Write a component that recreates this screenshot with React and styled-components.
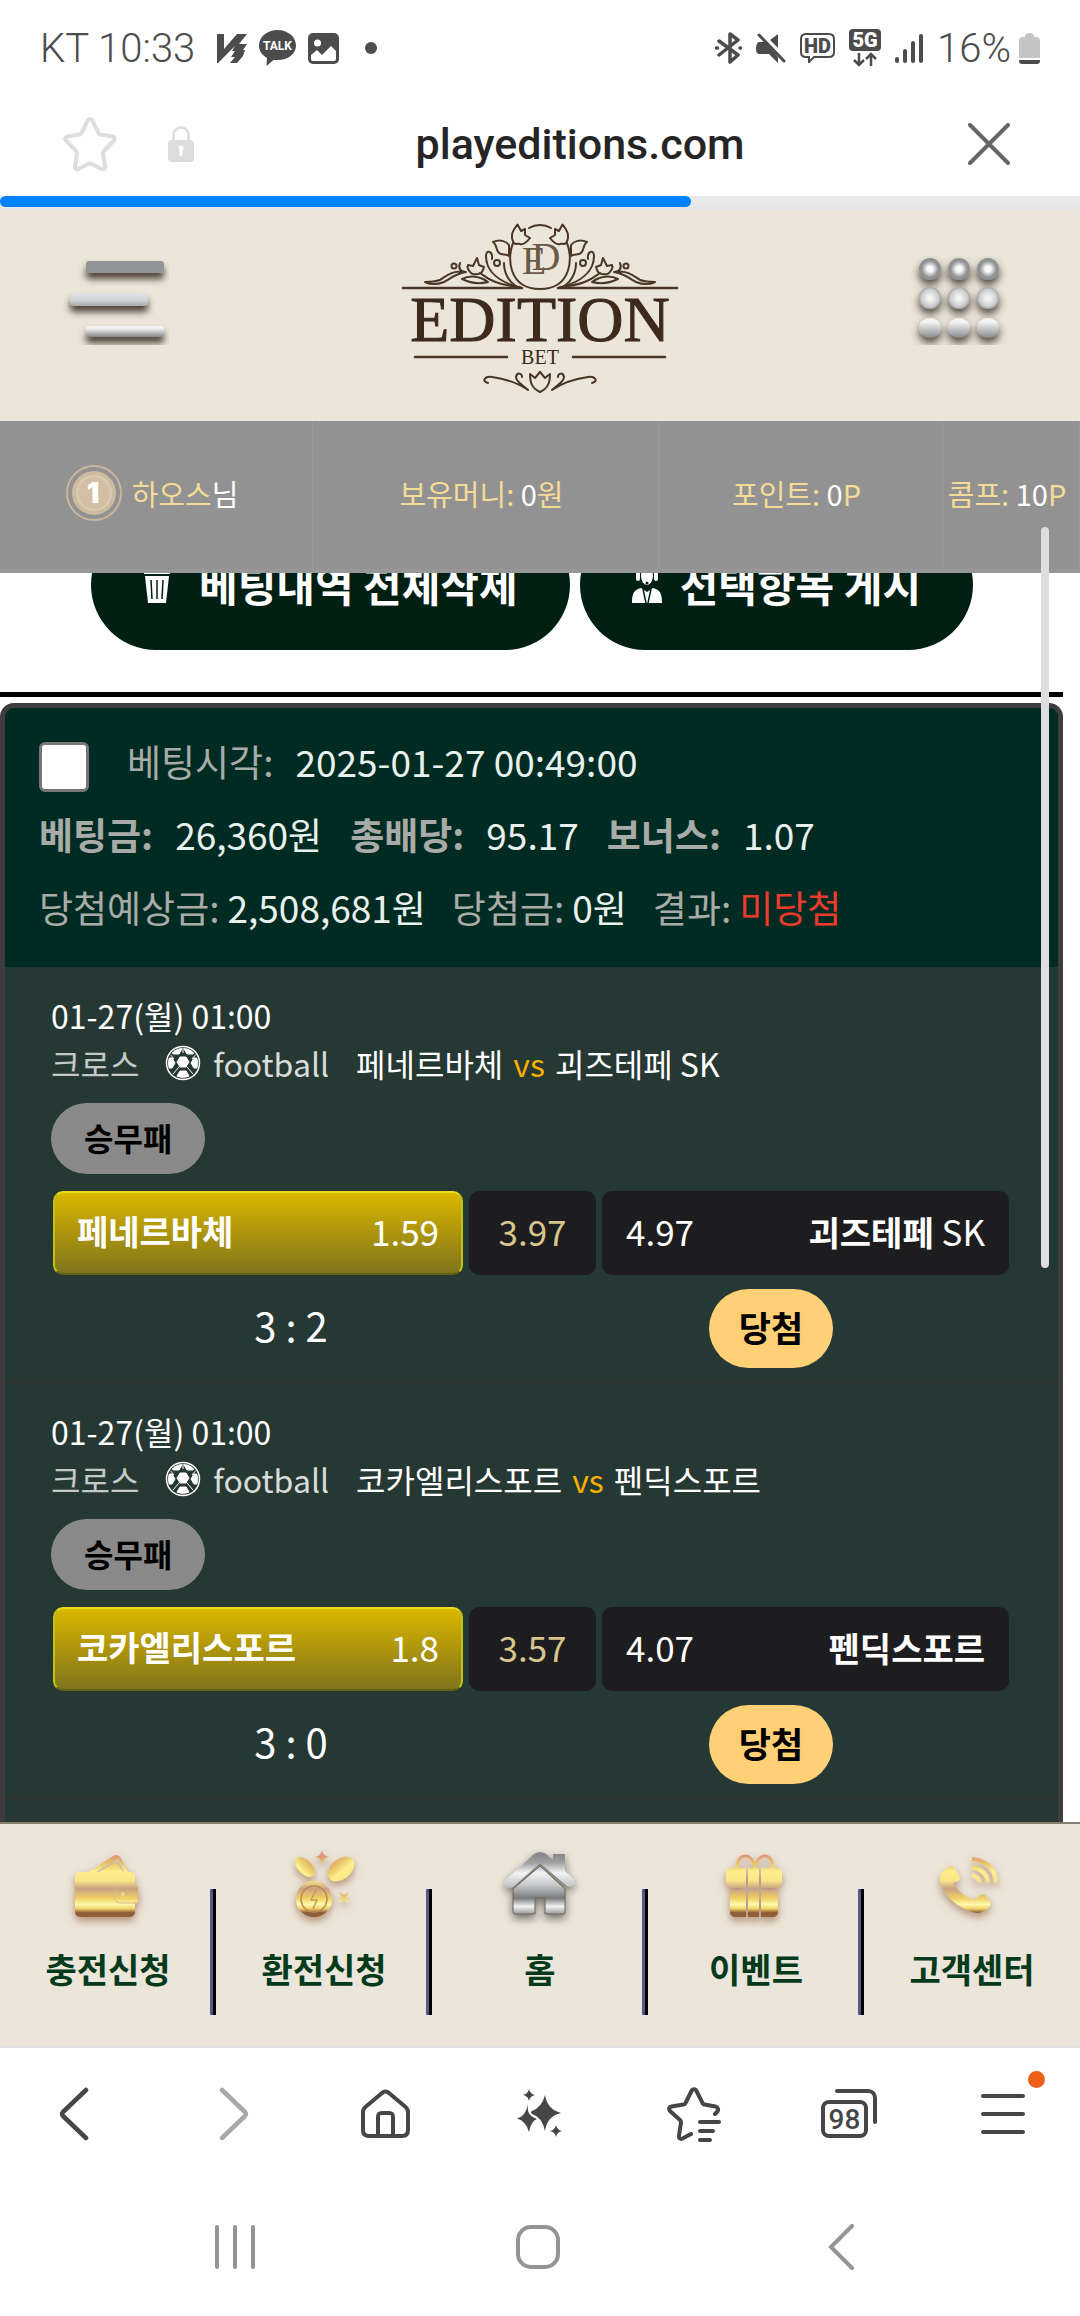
import React from 'react';
import styled, { createGlobalStyle } from 'styled-components';

// Global styles

const GlobalStyle = createGlobalStyle`
  :root {
    --fontKr: 'Noto Sans CJK KR', 'Noto Sans', sans-serif;
    --fontUi: Roboto, 'Noto Sans CJK KR', sans-serif;
    --cream: #ece6da;
    --gold: #f4dc98;
    --iconDark: #464646;
  }

  *, *::before, *::after {
    box-sizing: border-box;
  }

  body {
    margin: 0;
    background: #fefefe;
    font-family: var(--fontKr);
  }

  button {
    font-family: inherit;
    border: 0;
    padding: 0;
    background: none;
  }

  a {
    color: inherit;
    text-decoration: none;
  }

  svg {
    display: block;
    flex: none;
  }
`;

// Scoped styles

const Shell = styled.div`
  display: flex;
  flex-direction: column;
  height: 100vh;
  overflow: hidden;
`;

const StatusBar = styled.div`
  display: flex;
  justify-content: space-between;
  align-items: center;
  height: 96px;
  padding: 0 40px;
  flex: none;
  font-family: var(--fontUi);
  font-weight: 300;
  font-size: 40px;
  color: #4c4c4c;
`;

const StatusGroup = styled.div`
  display: flex;
  align-items: center;
  gap: ${({ $gap }) => $gap || 12}px;
`;

const Dot = styled.i`
  width: 12px;
  height: 12px;
  margin-left: 14px;
  border-radius: 50%;
  background: #4c4c4c;
`;

const AddressBar = styled.header`
  display: grid;
  grid-template-columns: 182px 1fr 182px;
  align-items: center;
  height: 100px;
  padding-bottom: 5px;
  flex: none;
`;

const AddressIcons = styled.div`
  display: flex;
  align-items: center;
  gap: 50px;
  padding-left: 63px;
`;

const Address = styled.div`
  padding-left: 80px;
  text-align: center;
  font-family: var(--fontUi);
  font-weight: 500;
  font-size: 43px;
  color: #252525;
`;

const CloseButton = styled.button`
  justify-self: center;
`;

const Progress = styled.div`
  height: 14px;
  flex: none;
  border-bottom: 3px solid #e5e5e5;
  background: #e9e9e9;
`;

const ProgressFill = styled.div`
  width: 64%;
  height: 11px;
  border-radius: 6px;
  background: #0381fe;
`;

const SiteHeader = styled.header`
  display: flex;
  justify-content: space-between;
  align-items: flex-start;
  height: 211px;
  padding: 5px 63px 0;
  flex: none;
  background: var(--cream);
`;

const HeaderButton = styled.button`
  width: 106px;
  margin-top: 41px;
`;

const Page = styled.div`
  position: relative;
  display: flex;
  flex-direction: column;
  flex: 1;
  min-height: 0;
`;

const UserBar = styled.div`
  display: grid;
  grid-template-columns: 313fr 346fr 284fr 137fr;
  height: 152px;
  flex: none;
  z-index: 1;
  border-bottom: 4px solid #979797;
  background: #929292;
`;

const UserCell = styled.div`
  display: flex;
  align-items: center;
  justify-content: center;
  gap: 10px;
  padding: 0 8px 4px 0;
  border-right: 1px solid #9a9a9a;
  font-size: 29px;
  color: var(--gold);
  white-space: nowrap;

  b {
    font-weight: 400;
    color: #fff;
  }
`;

const ScrollArea = styled.main`
  flex: 1;
  min-height: 0;
  padding-right: 17px;
  overflow: hidden;
  background: #fff;
`;

const ScrollThumb = styled.div`
  position: absolute;
  top: 106px;
  right: 31px;
  z-index: 2;
  width: 8px;
  height: 741px;
  border-radius: 4px;
  background: #dedee0;
`;

const Actions = styled.div`
  display: flex;
  gap: 10px;
  margin-top: -53px;
  padding: 0 0 42px 91px;
  border-bottom: 5px solid #000;
`;

const ActionButton = styled.button`
  display: flex;
  align-items: center;
  gap: 18px;
  height: 130px;
  padding: 0 52px 4px;
  border-radius: 65px;
  background: #021f13;
  color: #fff;
  font-weight: 700;
  font-size: 42px;
  white-space: nowrap;
`;

const Slip = styled.section`
  margin-top: 6px;
  border: 5px solid #3e3c3e;
  border-radius: 14px;
  overflow: hidden;
  background: #263834;
  color: #fff;
`;

const SlipHead = styled.div`
  padding: 16px 34px 24px;
  background: #002b22;
  color: #e9f1ee;
  font-size: 37px;
`;

const SlipRow = styled.div`
  display: flex;
  align-items: center;
  gap: ${({ $gap }) => $gap}px;
  height: 73px;
  white-space: nowrap;
`;

const Field = styled.div`
  display: flex;
  gap: ${({ $tight }) => ($tight ? 8 : 22)}px;
`;

const FieldLabel = styled.label`
  color: #a9aba8;
  font-weight: ${({ $bold }) => ($bold ? 700 : 400)};
`;

const FieldValue = styled.span`
  color: ${({ $lost }) => ($lost ? '#ef3b2d' : 'inherit')};
`;

const Checkbox = styled.input`
  appearance: none;
  align-self: flex-end;
  width: 50px;
  height: 50px;
  margin: 0 0 5px;
  border: 3px solid #767676;
  border-radius: 6px;
  background: #fff;
`;

const Match = styled.article`
  padding: 24px 47px 13px 46px;
  border-bottom: 2px solid #332f31;
  font-size: 32px;
`;

const MatchLine = styled.div`
  display: flex;
  align-items: center;
  height: 48px;
  white-space: nowrap;
`;

const League = styled.span`
  margin-right: 26px;
  color: #c4c9c7;
`;

const Sport = styled.span`
  margin: 0 27px 0 12px;
  color: #d9dddb;
`;

const Versus = styled.span`
  margin: 0 10px;
  color: #f5b000;
`;

const Kind = styled.span`
  display: inline-flex;
  align-items: center;
  height: 71px;
  margin-top: 16px;
  padding: 0 33px 4px;
  border-radius: 36px;
  background: #8a8a8a;
  color: #000;
  font-weight: 700;
`;

const Odds = styled.div`
  display: grid;
  grid-template-columns: 410fr 127fr 407fr;
  gap: 6px;
  margin-top: 17px;
  padding: 0 2px;
`;

const Odd = styled.button`
  display: flex;
  align-items: center;
  justify-content: space-between;
  height: 84px;
  padding: 0 24px 6px;
  border-radius: 10px;
  background: #1d1d1f;
  color: #fff;
  font-size: 35px;
  white-space: nowrap;

  b {
    font-size: 34px;
  }
`;

const PickedOdd = styled(Odd)`
  border: 2px solid #c0c40e;
  border-top-color: #e6e01a;
  border-bottom-color: #66601a;
  background: linear-gradient(#dab600, #80741c);
  padding: 0 22px 6px;
`;

const DrawOdd = styled(Odd)`
  justify-content: center;
  color: #d8c58c;
`;

const Outcome = styled.div`
  display: grid;
  grid-template-columns: 1fr 1fr;
  align-items: center;
  justify-items: center;
  height: 79px;
  margin-top: 14px;
`;

const Score = styled.span`
  padding-bottom: 8px;
  font-size: 40px;
`;

const Win = styled.span`
  display: flex;
  align-items: center;
  height: 79px;
  padding: 0 30px 4px;
  border-radius: 40px;
  background: #ffd076;
  color: #000;
  font-weight: 700;
  font-size: 35px;
`;

const SiteNav = styled.nav`
  display: grid;
  grid-template-columns: repeat(5, 1fr);
  height: 226px;
  flex: none;
  border-top: 2px solid #857d6f;
  border-bottom: 2px solid #e3e1e3;
  background: var(--cream);
`;

const SiteNavLink = styled.a`
  display: flex;
  flex-direction: column;
  align-items: center;
  padding-top: 24px;
  color: #053a1c;
  font-weight: 700;
  font-size: 34px;
  line-height: 82px;
  background: linear-gradient(90deg, #545a82 50%, #000 50%) no-repeat right 0
    top 65px / 6px 126px;

  &:last-child {
    background: none;
  }
`;

const Toolbar = styled.nav`
  display: grid;
  grid-template-columns: repeat(7, 1fr);
  align-items: center;
  justify-items: center;
  height: 132px;
  flex: none;
`;

const ToolButton = styled.button`
  position: relative;
`;

const Badge = styled.i`
  position: absolute;
  top: -21px;
  right: -20px;
  width: 17px;
  height: 17px;
  border-radius: 50%;
  background: #ee5f18;
`;

const SystemNav = styled.nav`
  display: grid;
  grid-template-columns: repeat(3, 1fr);
  align-items: center;
  justify-items: center;
  height: 136px;
  padding: 0 88px 2px 84px;
  flex: none;
`;

// Status icons

const V3Icon = () => (
  <svg width="30" height="30" viewBox="0 0 30 30" fill="#4c4c4c">
    <path d="M0 1h7v15L20 1h10l-8 10h8l-4 6h2l-2 6-6 7h-7l5-6h-4l4-6h-3l3-5L1 30H0z" />
  </svg>
);

const TalkIcon = () => (
  <svg width="37" height="36" viewBox="0 0 37 36" fill="#4c4c4c">
    <path d="M18.500 0C29 0 37 7 37 15.500S29 30 18.500 30l-4 0L7.500 36 8 28C3 25 0 21 0 15.500 0 7 8 0 18.500 0z" />
    <text x="18.500" y="20" fill="#fff" fontSize="12" fontWeight="700" textAnchor="middle">
      TALK
    </text>
  </svg>
);

const PictureIcon = () => (
  <svg width="31" height="31" viewBox="0 0 31 31">
    <rect width="31" height="31" rx="5" fill="#4c4c4c" />
    <circle cx="9.500" cy="10" r="3.500" fill="#fff" />
    <path d="M3 22l6-5 5 5 9-9 5 5v8a2 2 0 0 1-2 2H5a2 2 0 0 1-2-2z" fill="#fff" />
  </svg>
);

const BluetoothIcon = () => (
  <svg width="27" height="32" viewBox="0 0 27 32" fill="none" stroke="#4c4c4c" strokeWidth="3.500" strokeLinejoin="round" strokeLinecap="round">
    <path d="M4 9l19 14-8 7V2l8 6L4 23" />
    <path d="M1.500 16h1M25 16h.5" />
  </svg>
);

const MuteIcon = () => (
  <svg width="30" height="30" viewBox="0 0 30 30">
    <path d="M3 9h6l13 15v6l-9-9H4c-3 0-4-2-4-5s1-7 3-7zM22 1v14L14 7z" fill="#4c4c4c" />
    <path d="M3 2l25 26" stroke="#4c4c4c" strokeWidth="3" strokeLinecap="round" />
  </svg>
);

const HdIcon = () => (
  <svg width="35" height="30" viewBox="0 0 35 30">
    <path d="M6 1h23c3 0 5 2 5 5v13c0 3-2 5-5 5H14l-5 5v-5H6c-3 0-5-2-5-5V6c0-3 2-5 5-5z" fill="none" stroke="#4c4c4c" strokeWidth="2" />
    <text x="17.500" y="20" fill="#4c4c4c" fontSize="20" fontWeight="900" textAnchor="middle">
      HD
    </text>
  </svg>
);

const FiveGIcon = () => (
  <svg width="32" height="38" viewBox="0 0 32 38">
    <rect width="32" height="22" rx="4" fill="#4c4c4c" />
    <text x="16" y="18" fill="#fff" fontSize="20" fontWeight="900" textAnchor="middle">
      5G
    </text>
    <path d="M10 24v12M5 31l5 5 5-5M22 37V25M17 30l5-5 5 5" fill="none" stroke="#4c4c4c" strokeWidth="2.500" />
  </svg>
);

const SignalIcon = () => (
  <svg width="28" height="30" viewBox="0 0 28 30" stroke="#4c4c4c" strokeWidth="4" strokeLinecap="round">
    <path d="M2 26v2M10 18v10M18 10v18M26 3v25" />
  </svg>
);

const BatteryIcon = () => (
  <svg width="21" height="31" viewBox="0 0 21 31">
    <path d="M6 3c0-4 9-4 9 0v1h2c3 0 4 2 4 4v17H0V8c0-2 1-4 4-4h2z" fill="#c4c4c4" />
    <path d="M0 27h21c0 3-1 4-3 4H3c-2 0-3-1-3-4z" fill="#4c4c4c" />
  </svg>
);

// Browser icons

const starPath =
  'M27 3c1 0 2 1 2.500 2l6 12c.5 1 1 1.500 2 1.500l12 2c2 .5 3 2 1.500 4L41 35c-.5.500-1 1.500-1 2.500l2 13c.5 2-1.500 3.500-3.500 2.500L28 47.500c-.7-.4-1.500-.4-2 0L15.500 53c-2 1-4-.5-3.500-2.500l2-13c0-1-.3-2-1-2.500L3 24.500c-1.500-1.500-.5-3.500 1.500-4l12-2c1 0 1.500-.5 2-1.500l6-12c.5-1 1.500-2 2.500-2z';

const StarIcon = () => (
  <svg width="55" height="56" viewBox="0 0 55 56" fill="none" stroke="#dcdfde" strokeWidth="4">
    <path d={starPath} />
  </svg>
);

const LockIcon = () => (
  <svg width="26" height="36" viewBox="0 0 26 36">
    <path d="M5.500 16V9a7.500 7.500 0 0 1 15 0v7" fill="none" stroke="#dcdcdc" strokeWidth="2.500" />
    <rect y="14" width="26" height="22" rx="4" fill="#dcdcdc" />
    <path d="M13 22v7" stroke="#fff" strokeWidth="3" strokeLinecap="round" />
    <circle cx="13" cy="22" r="2.500" fill="#fff" />
  </svg>
);

const CloseIcon = () => (
  <svg width="42" height="42" viewBox="0 0 42 42" stroke="#666" strokeWidth="4" strokeLinecap="round">
    <path d="M2 2l38 38M40 2L2 40" />
  </svg>
);

const BackIcon = ({ flip }) => (
  <svg width="40" height="54" viewBox="0 0 40 54" fill="none" stroke={flip ? '#a8a8a8' : '#464646'} strokeWidth="4.500" strokeLinecap="round" strokeLinejoin="round">
    <path d={flip ? 'M11 3l23 22q2 2 0 4L11 51' : 'M29 3L6 25q-2 2 0 4l23 22'} />
  </svg>
);

const HouseIcon = () => (
  <svg width="49" height="50" viewBox="0 0 49 50" fill="none" stroke="#464646" strokeWidth="4">
    <path d="M2 23c0-2 1-4 3-5.500L21 4c2-2 5-2 7 0l16 13.500c2 1.500 3 3.500 3 5.500v18c0 4-2 6-6 6H8c-4 0-6-2-6-6z" />
    <path d="M17 47V28c0-3 1-4 4-4h7c3 0 4 1 4 4v19" />
  </svg>
);

const SparkleIcon = () => (
  <svg width="46" height="50" viewBox="0 0 46 50" fill="#464646">
    <path d="M28 6q2 14 16 18-14 3-16 18-3-14-13-17-2-2 0-3Q25 18 28 6z" />
    <path d="M11 15c-1 8 1 12 9 15q-6 2-8 13Q9 32 0 29.500 9 27 11 15z" />
    <path d="M12 0q1 5 6 6-5 1-6 6-1-5-6-6 5-1 6-6zM39 36q1 5 6 6-5 1-6 6-1-5-6-6 5-1 6-6z" />
  </svg>
);

const BookmarksIcon = () => (
  <svg width="55" height="56" viewBox="0 0 55 56" fill="none" stroke="#464646" strokeWidth="4" strokeLinecap="round" strokeLinejoin="round">
    <path d="M48 28l2-2c2-2 1-5-1.500-5.500l-11-2c-1 0-1.500-.5-2-1.500l-6-12c-1-2.500-4-2.500-5 0l-6 12c-.5 1-1 1.500-2 1.500l-12 2c-2.500.5-3 2.500-1.500 4.500L13 34c.7.700 1 1.500 1 2.500l-2 13c-.5 3 1.500 4 3.500 3L24 48" />
    <path d="M33 36h19M33 45h13M33 54h10" />
  </svg>
);

const TabsIcon = () => (
  <svg width="56" height="50" viewBox="0 0 56 50" fill="none" stroke="#464646" strokeWidth="4" strokeLinecap="round">
    <rect x="2" y="13" width="43" height="34" rx="6" />
    <path d="M16 2h31c4 0 7 3 7 7v24" />
    <text x="23.500" y="40" fill="#464646" stroke="none" fontFamily="Roboto" fontSize="28" fontWeight="500" textAnchor="middle">
      98
    </text>
  </svg>
);

const MenuIcon = () => (
  <svg width="44" height="44" viewBox="0 0 44 44" stroke="#464646" strokeWidth="4" strokeLinecap="round">
    <path d="M2 4h40M2 22h40M2 40h40" />
  </svg>
);

// Site artwork

const silverStops = (
  <>
    <stop offset="0" stopColor="#85878a" />
    <stop offset="0.14" stopColor="#a0a1a3" />
    <stop offset="0.3" stopColor="#f4f4f5" />
    <stop offset="0.5" stopColor="#c4c6c9" />
    <stop offset="0.7" stopColor="#77797b" />
    <stop offset="0.83" stopColor="#f2f2f2" />
    <stop offset="1" stopColor="#77797b" />
  </>
);

const BarsIcon = () => (
  <svg width="106" height="89" viewBox="0 0 106 89">
    <defs>
      <linearGradient id="bar" x2="0" y2="1">
        <stop offset="0" stopColor="#e2e3e5" />
        <stop offset="0.6" stopColor="#ced0d3" />
        <stop offset="1" stopColor="#a6a7a9" />
      </linearGradient>
      <linearGradient id="barLow" x2="0" y2="1">
        <stop offset="0.2" stopColor="#f4f4f4" />
        <stop offset="1" stopColor="#85878a" />
      </linearGradient>
      <filter id="barShadow" x="-20%" y="-20%" width="140%" height="150%">
        <feDropShadow dx="0" dy="6" stdDeviation="3.500" floodColor="#3a322c" floodOpacity="0.9" />
      </filter>
    </defs>
    <g filter="url(#barShadow)">
      <rect x="23" y="5" width="78" height="12" rx="3" fill="#929496" />
      <rect x="7" y="37" width="78" height="13" rx="4" fill="url(#bar)" />
      <rect x="23" y="70" width="78" height="11" rx="3" fill="url(#barLow)" />
    </g>
  </svg>
);

const DotsIcon = () => (
  <svg width="106" height="89" viewBox="0 0 106 89">
    <defs>
      <radialGradient id="dotTop">
        <stop offset="0.25" stopColor="#fafafa" />
        <stop offset="0.75" stopColor="#909294" />
      </radialGradient>
      <radialGradient id="dotMid">
        <stop offset="0.2" stopColor="#f5f3f0" />
        <stop offset="0.8" stopColor="#c8cacc" />
        <stop offset="1" stopColor="#9fa1a3" />
      </radialGradient>
      <filter id="dotShadow" x="-20%" y="-20%" width="140%" height="150%">
        <feDropShadow dx="0" dy="5" stdDeviation="4" floodColor="#3a322c" floodOpacity="0.9" />
      </filter>
    </defs>
    <g filter="url(#dotShadow)">
      {[19, 48, 77].map((x) => (
        <React.Fragment key={x}>
          <circle cx={x} cy="13" r="11" fill="url(#dotTop)" />
          <circle cx={x} cy="42" r="11" fill="url(#dotMid)" />
          <ellipse cx={x} cy="72" rx="11" ry="10" fill="url(#barLow)" />
        </React.Fragment>
      ))}
    </g>
  </svg>
);

const LogoHalf = (props) => (
  <g {...props}>
    <path d="M3 73h119" strokeWidth="2.500" />
    <path d="M113 28C107 42 108 74 140 74" />
    <path d="M129 13q5-3 11-3" />
    <path d="M114 28c-5-8 0-14 3.500-18.500L121 16l4-2 0 6 5 3c-3 4-6 7-10 6-3-1-4 1-6-1z" />
    <path d="M93 27c7-3 13-1 16 3v11c-3-2-5-1-8-2-6-2-3-9-8-12z" />
    <path d="M92 44c1-8-6-10-6-3 0 16 14 26 32 31" />
    <path d="M104 48c0 10 5 19 12 23" />
    <circle cx="97" cy="48" r="3" />
    <path d="M71 58c-4-4-4-6-3-8l5 1 4-8 2 7 5 2c-1 4-3 7-6 7s-5 1-7-1z" />
    <path d="M80 58c6 4 14 12 40 14" />
    <path d="M88 67c-8 2-18 1-26-3 8-4 18-3 26 3z" />
    <path d="M60 48c-2 5 0 9 6 9-14-2-20 4-26 8-6 2-10 2-15 2 6 3 14 2 19 0 6-3 10-8 22-10" />
    <circle cx="54" cy="51" r="2.500" />
    <path d="M15 142h92" strokeWidth="2.500" />
    <path d="M88 168c-7-2-3-7 4-6 14 2 26 6 36 13-6-6-12-8-12-13 1-5 6-4 6 0" />
    <path d="M140 177c-8-4-10-9-10-18l5 4 5-6" />
  </g>
);

const Logo = () => (
  <svg width="280" height="182" viewBox="0 0 280 182" role="img" aria-label="EDITION BET">
    <g fill="none" stroke="#4a3624" strokeWidth="2" strokeLinecap="round" strokeLinejoin="round">
      <LogoHalf />
      <LogoHalf transform="matrix(-1 0 0 1 280 0)" />
    </g>
    <g fill="#3d2a1d" fontFamily="'Liberation Serif', serif" textAnchor="middle">
      <text x="134" y="59" fontSize="40" fill="#6b5846">
        E
      </text>
      <text x="146" y="55" fontSize="40" fill="#6b5846">
        D
      </text>
      <text x="140" y="126" fontSize="64" stroke="#3d2a1d">
        EDITION
      </text>
      <text x="140" y="149" fontSize="20">
        BET
      </text>
    </g>
  </svg>
);

const RankIcon = () => (
  <svg width="56" height="58" viewBox="0 0 56 58">
    <circle cx="28" cy="29" r="27" fill="none" stroke="#c9b79c" strokeWidth="2" />
    <circle cx="28" cy="29" r="22" fill="#cdbb9f" />
    <circle cx="28" cy="29" r="17" fill="#d3bfa4" stroke="#dccbb2" strokeWidth="2" />
    <text x="27" y="39" fill="#fff" fontFamily="Inter, sans-serif" fontSize="28" fontWeight="900" textAnchor="middle">
      1
    </text>
  </svg>
);

const TrashIcon = () => (
  <svg width="38" height="40" viewBox="0 0 38 40" fill="#fff">
    <path d="M9 0h10l1 4h7v7H1V4h7z" />
    <path d="M2 13h24l-3 27H5z" />
    <path d="M8 17l1 19M14 17v19M20 17l-1 19" stroke="#021f13" strokeWidth="1.500" />
  </svg>
);

const AgentIcon = () => (
  <svg width="30" height="40" viewBox="0 0 30 40" fill="#fff">
    <path d="M6 12C6-1 24-1 24 12" fill="none" stroke="#fff" strokeWidth="2" />
    <rect x="4" y="9" width="4" height="9" rx="2" />
    <rect x="22" y="9" width="4" height="9" rx="2" />
    <ellipse cx="15" cy="13" rx="6" ry="9" />
    <path d="M0 40c0-10 2-13 9-15l6 4 6-4c7 2 9 5 9 15z" />
    <path d="M11 26l3 14M19 26l-3 14" stroke="#021f13" strokeWidth="1.500" />
    <circle cx="15" cy="20" r="1.500" fill="#021f13" />
  </svg>
);

const hexes = [
  [18, 17],
  [18, 31],
  [4, 18],
  [32, 18],
  [11, 4],
  [25, 4],
];

const BallIcon = () => (
  <svg width="36" height="36" viewBox="0 0 36 36">
    <clipPath id="ball">
      <circle cx="18" cy="18" r="15" />
    </clipPath>
    <circle cx="18" cy="18" r="16.500" fill="none" stroke="#fff" strokeWidth="1.500" />
    <g clipPath="url(#ball)" fill="#fff" stroke="#fff">
      {hexes.map(([x, y]) => (
        <path key={`${x}-${y}`} d={`M${x - 3} ${y - 5}h6l3 5-3 5h-6l-3-5z`} />
      ))}
      <path d="M14 22l-6 7M22 22l6 7M18 0v8M4 8l5 6M32 8l-5 6" fill="none" />
    </g>
  </svg>
);

const NavArt = ({ id, silver, children }) => (
  <svg width="90" height="80" viewBox="0 0 90 80">
    <defs>
      <linearGradient id={`${id}Fill`} gradientUnits="userSpaceOnUse" x1="0" y1="6" x2="0" y2="69">
        {silver ? (
          silverStops
        ) : (
          <>
            <stop offset="0" stopColor="#e08f80" />
            <stop offset="0.14" stopColor="#e3c064" />
            <stop offset="0.28" stopColor="#fff08a" />
            <stop offset="0.42" stopColor="#fbe688" />
            <stop offset="0.55" stopColor="#c8a184" />
            <stop offset="0.7" stopColor="#f0cf62" />
            <stop offset="0.8" stopColor="#fffaaa" />
            <stop offset="0.87" stopColor="#f0d068" />
            <stop offset="0.93" stopColor="#8f5f38" />
          </>
        )}
      </linearGradient>
      <filter id={`${id}Shadow`} x="-20%" y="-20%" width="140%" height="150%">
        <feDropShadow dx="0" dy="4" stdDeviation="4" floodColor={silver ? '#222' : '#8a5236'} floodOpacity="0.6" />
      </filter>
    </defs>
    <g fill={`url(#${id}Fill)`} filter={`url(#${id}Shadow)`}>
      {children}
    </g>
  </svg>
);

const WalletArt = () => (
  <NavArt id="wallet">
    <path d="M26 24L50 8q5-3 8 2l7 14h-4l-6-13-22 13z" />
    <path d="M36 24l17-10 7 10z" />
    <rect x="12" y="24" width="60" height="45" rx="5" />
    <path d="M75 38H58c-10 0-10 17 0 17h17z" stroke="#d9b78c" strokeWidth="1" />
    <circle cx="60" cy="46" r="2" fill="#ecd5a0" />
  </NavArt>
);

const CoinsArt = () => (
  <NavArt id="coins">
    <ellipse cx="26" cy="19" rx="12" ry="7" transform="rotate(45 26 19)" />
    <ellipse cx="62" cy="21" rx="15" ry="10" transform="rotate(-40 62 21)" />
    <path d="M43 2q1 6 7 7-6 1-7 7-1-6-7-7 6-1 7-7z" />
    <circle cx="35" cy="51" r="18" />
    <circle cx="35" cy="51" r="13" fill="none" stroke="#b98a55" strokeWidth="1.500" />
    <path d="M37 42l-5 10h6l-4 9" fill="none" stroke="#c89b60" strokeWidth="1.500" />
    <path d="M60 44l5 3 5-3-3 5 3 6-5-3-5 3 3-6z" />
  </NavArt>
);

const HomeArt = () => (
  <NavArt id="home" silver>
    <path d="M45 4q3 0 6 2l7 6V6h12v17l8 8q3 4 0 6-3 3-7 0L45 15 19 38q-5 3-8 0-3-4 1-7L39 6q3-2 6-2z" />
    <path d="M18 41l27-23 25 23v23q0 2-2 2H50V50H40v16H20q-2 0-2-2z" stroke="#6a6259" strokeWidth="1" />
  </NavArt>
);

const GiftArt = () => (
  <NavArt id="gift">
    <path d="M26 20c0-16 16-16 18 0 2-16 18-16 18 0" fill="none" stroke="url(#giftFill)" strokeWidth="3" />
    <path d="M20 20h15v20H20q-4-1-5-6v-8q0-5 5-6zM37 20h11v20H37zM50 20h16q5 1 5 6v8q-1 5-5 6H50z" />
    <path d="M19 42h16v27H24q-4 0-5-4zM37 42h11v27H37zM50 42h17v23q-1 4-5 4H50z" />
  </NavArt>
);

const PhoneArt = () => (
  <NavArt id="phone">
    <path d="M22 19q3-2 5 1l5 8q2 3-1 5l-5 2c4 8 12 14 22 17l4-4q3-3 6-1l4 5q3 4 0 7-6 6-12 6C32 62 14 46 13 31q-1-6 9-12z" />
    <path d="M45 11q23 3 24 24M45 19q15 3 16 16M45 27q7 2 8 8" fill="none" stroke="url(#phoneFill)" strokeWidth="4" />
  </NavArt>
);

// Data

const slipTotals = [
  ['베팅금:', '26,360원'],
  ['총배당:', '95.17'],
  ['보너스:', '1.07'],
];

const slipResults = [
  ['당첨예상금:', '2,508,681원'],
  ['당첨금:', '0원'],
  ['결과:', '미당첨', true],
];

const matches = [
  { home: '페네르바체', away: '괴즈테페', suffix: ' SK', odds: ['1.59', '3.97', '4.97'], score: '3 : 2' },
  { home: '코카엘리스포르', away: '펜딕스포르', suffix: '', odds: ['1.8', '3.57', '4.07'], score: '3 : 0' },
];

const navLinks = [
  ['충전신청', WalletArt],
  ['환전신청', CoinsArt],
  ['홈', HomeArt],
  ['이벤트', GiftArt],
  ['고객센터', PhoneArt],
];

// Main Component

const MatchCard = ({ home, away, suffix, odds, score }) => (
  <Match>
    <MatchLine>01-27(월) 01:00</MatchLine>
    <MatchLine>
      <League>크로스</League>
      <BallIcon />
      <Sport>football</Sport>
      {home}
      <Versus>vs</Versus>
      {away + suffix}
    </MatchLine>
    <Kind>승무패</Kind>
    <Odds>
      <PickedOdd>
        <b>{home}</b>
        <span>{odds[0]}</span>
      </PickedOdd>
      <DrawOdd>{odds[1]}</DrawOdd>
      <Odd>
        <span>{odds[2]}</span>
        <span>
          <b>{away}</b>
          {suffix}
        </span>
      </Odd>
    </Odds>
    <Outcome>
      <Score>{score}</Score>
      <Win>당첨</Win>
    </Outcome>
  </Match>
);

const App = () => (
  <Shell>
    <GlobalStyle />
    <StatusBar>
      <StatusGroup>
        <span>KT 10:33&nbsp;</span>
        <V3Icon />
        <TalkIcon />
        <PictureIcon />
        <Dot />
      </StatusGroup>
      <StatusGroup $gap={14}>
        <BluetoothIcon />
        <MuteIcon />
        <HdIcon />
        <FiveGIcon />
        <SignalIcon />
        <StatusGroup $gap={8}>
          <span>16%</span>
          <BatteryIcon />
        </StatusGroup>
      </StatusGroup>
    </StatusBar>
    <AddressBar>
      <AddressIcons>
        <StarIcon />
        <LockIcon />
      </AddressIcons>
      <Address>playeditions.com</Address>
      <CloseButton aria-label="close">
        <CloseIcon />
      </CloseButton>
    </AddressBar>
    <Progress>
      <ProgressFill />
    </Progress>
    <SiteHeader>
      <HeaderButton aria-label="menu">
        <BarsIcon />
      </HeaderButton>
      <Logo />
      <HeaderButton aria-label="games">
        <DotsIcon />
      </HeaderButton>
    </SiteHeader>
    <Page>
      <UserBar>
        <UserCell>
          <RankIcon />
          <span>
            하오스<b>님</b>
          </span>
        </UserCell>
        <UserCell>
          <span>
            보유머니: <b>0</b>원
          </span>
        </UserCell>
        <UserCell>
          <span>
            포인트: <b>0</b>P
          </span>
        </UserCell>
        <UserCell>
          <span>
            콤프: <b>10</b>P
          </span>
        </UserCell>
      </UserBar>
      <ScrollArea>
        <Actions>
          <ActionButton>
            <TrashIcon />
            베팅내역 전체삭제
          </ActionButton>
          <ActionButton>
            <AgentIcon />
            선택항목 게시
          </ActionButton>
        </Actions>
        <Slip>
          <SlipHead>
            <SlipRow $gap={38}>
              <Checkbox type="checkbox" id="slip" />
              <Field>
                <FieldLabel htmlFor="slip">베팅시각:</FieldLabel>
                <FieldValue>2025-01-27 00:49:00</FieldValue>
              </Field>
            </SlipRow>
            <SlipRow $gap={28}>
              {slipTotals.map(([label, value]) => (
                <Field key={label}>
                  <FieldLabel as="span" $bold>
                    {label}
                  </FieldLabel>
                  <FieldValue>{value}</FieldValue>
                </Field>
              ))}
            </SlipRow>
            <SlipRow $gap={26}>
              {slipResults.map(([label, value, lost]) => (
                <Field key={label} $tight>
                  <FieldLabel as="span">{label}</FieldLabel>
                  <FieldValue $lost={lost}>{value}</FieldValue>
                </Field>
              ))}
            </SlipRow>
          </SlipHead>
          {matches.map((match) => (
            <MatchCard key={match.home} {...match} />
          ))}
          <Match />
        </Slip>
      </ScrollArea>
      <ScrollThumb />
    </Page>
    <SiteNav>
      {navLinks.map(([label, Art]) => (
        <SiteNavLink href="#" key={label}>
          <Art />
          {label}
        </SiteNavLink>
      ))}
    </SiteNav>
    <Toolbar>
      <ToolButton aria-label="back">
        <BackIcon />
      </ToolButton>
      <ToolButton aria-label="forward">
        <BackIcon flip />
      </ToolButton>
      <ToolButton aria-label="home">
        <HouseIcon />
      </ToolButton>
      <ToolButton aria-label="assist">
        <SparkleIcon />
      </ToolButton>
      <ToolButton aria-label="bookmarks">
        <BookmarksIcon />
      </ToolButton>
      <ToolButton aria-label="tabs">
        <TabsIcon />
      </ToolButton>
      <ToolButton aria-label="more">
        <MenuIcon />
        <Badge />
      </ToolButton>
    </Toolbar>
    <SystemNav>
      <ToolButton aria-label="recent apps">
        <svg width="40" height="44" viewBox="0 0 40 44" stroke="#949494" strokeWidth="4" strokeLinecap="round">
          <path d="M2 2v40M20 2v40M38 2v40" />
        </svg>
      </ToolButton>
      <ToolButton aria-label="home screen">
        <svg width="44" height="44" viewBox="0 0 44 44" fill="none" stroke="#949494" strokeWidth="4">
          <rect x="2" y="2" width="40" height="40" rx="13" />
        </svg>
      </ToolButton>
      <ToolButton aria-label="system back">
        <svg width="26" height="46" viewBox="0 0 26 46" fill="none" stroke="#949494" strokeWidth="4" strokeLinecap="round">
          <path d="M24 2L3 23l21 21" />
        </svg>
      </ToolButton>
    </SystemNav>
  </Shell>
);

export default App;
